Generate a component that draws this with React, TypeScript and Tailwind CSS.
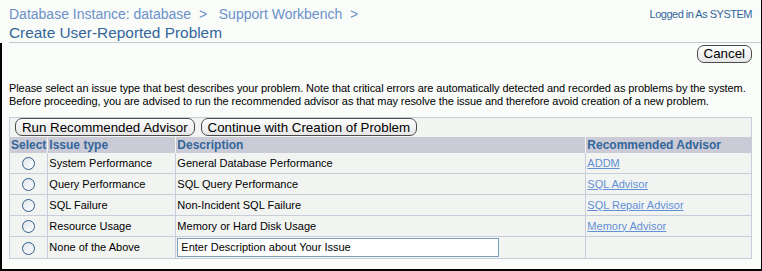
import React from "react";

const rows = [
  { type: "System Performance", desc: "General Database Performance", advisor: "ADDM" },
  { type: "Query Performance", desc: "SQL Query Performance", advisor: "SQL Advisor" },
  { type: "SQL Failure", desc: "Non-Incident SQL Failure", advisor: "SQL Repair Advisor" },
  { type: "Resource Usage", desc: "Memory or Hard Disk Usage", advisor: "Memory Advisor" },
];

function Btn({ children }: { children: React.ReactNode }) {
  return (
    <button className="h-[18px] px-[6px] rounded-[7px] border border-[#4a4a4a] bg-gradient-to-b from-white to-[#e6e6e6] text-[13.3px] leading-none text-black">
      {children}
    </button>
  );
}

function Radio() {
  return (
    <span className="inline-block w-[13px] h-[13px] rounded-full border border-[#2f5d8a] bg-gradient-to-br from-[#dfe4ea] to-white align-middle" />
  );
}

export default function App() {
  return (
    <div className="w-[762px] h-[271px] bg-[#f9fcf9] border-r border-b-2 border-black flex flex-col font-['Liberation_Sans',sans-serif] overflow-hidden">
      {/* header */}
      <div className="flex justify-between items-start pl-[9px] pr-[9px] pt-[6px]">
        <div className="text-[14px] leading-[16px] text-[#6b91c9] whitespace-pre">
          {"Database Instance: database  >   Support Workbench  >"}
        </div>
        <div className="text-[11px] leading-[16px] text-[#336699] tracking-[-0.5px]">Logged in As SYSTEM</div>
      </div>
      <div className="pl-[9px] text-[15.4px] leading-[18px] text-[#336699] mt-[2px]">
        Create User-Reported Problem
      </div>
      <div className="ml-[9px] border-b border-[#c4c8d4]" />

      {/* body */}
      <div className="flex-1 border-l-2 border-black pl-[7px] pr-[9px]">
        <div className="flex justify-end pt-[2px]">
          <Btn>Cancel</Btn>
        </div>
        <p className="mt-[19px] text-[11px] leading-[13px] text-black whitespace-nowrap tracking-[-0.08px]">
          Please select an issue type that best describes your problem. Note that critical errors are automatically detected and recorded as problems by the system.
          <br />
          Before proceeding, you are advised to run the recommended advisor as that may resolve the issue and therefore avoid creation of a new problem.
        </p>

        <table className="mt-[9px] w-[743px] border border-[#c9ccd9] bg-[#f2f4f2] border-collapse text-[11px] text-black">
          <tbody>
            <tr>
              <td colSpan={4} className="h-[19px] px-[5px] py-0 align-middle">
                <div className="flex gap-[6px]">
                  <Btn>Run Recommended Advisor</Btn>
                  <Btn>Continue with Creation of Problem</Btn>
                </div>
              </td>
            </tr>
            <tr className="bg-[#cbcbd8] text-[12px] leading-[16px] font-bold text-[#336699] h-[16px]">
              <th className="w-[37px] text-left px-[1px] py-0 border-r border-[#f2f4f2]">Select</th>
              <th className="w-[128px] text-left px-[1px] py-0 border-r border-[#f2f4f2]">Issue type</th>
              <th className="w-[410px] text-left px-[1px] py-0 border-r border-[#f2f4f2]">Description</th>
              <th className="text-left px-[1px] py-0">Recommended Advisor</th>
            </tr>
            {rows.map((r) => (
              <tr key={r.type} className="h-[21px] border-b border-[#c9ccd9]">
                <td className="text-center border-r border-[#c9ccd9]">
                  <Radio />
                </td>
                <td className="px-[1px] border-r border-[#c9ccd9]">{r.type}</td>
                <td className="px-[1px] border-r border-[#c9ccd9]">{r.desc}</td>
                <td className="px-[1px]">
                  <a className="text-[#6290d6] underline">{r.advisor}</a>
                </td>
              </tr>
            ))}
            <tr className="h-[22px]">
              <td className="text-center border-r border-[#c9ccd9]">
                <Radio />
              </td>
              <td className="px-[1px] border-r border-[#c9ccd9]">None of the Above</td>
              <td className="px-[1px] border-r border-[#c9ccd9]">
                <div className="w-[322px] h-[19px] border border-[#7f9db9] bg-white px-[3px] leading-[17px] text-[11px]">
                  Enter Description about Your Issue
                </div>
              </td>
              <td />
            </tr>
          </tbody>
        </table>
      </div>
    </div>
  );
}
